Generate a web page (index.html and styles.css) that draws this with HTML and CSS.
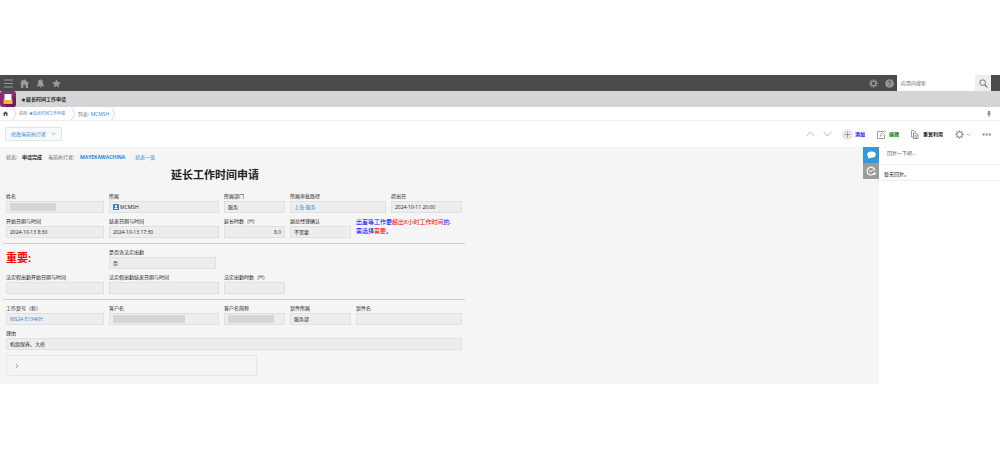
FILE: index.html
```html
<!DOCTYPE html>
<html lang="zh-CN">
<head>
    <meta charset="UTF-8">
    <title>延长时间工作申请</title>
    <link rel="stylesheet" href="styles.css">
</head>
<body>
    <!-- 顶部导航 -->
    <header class="topbar">
        <nav class="topbar-left">
            <button class="icon-btn" aria-label="菜单"><svg width="9" height="9" viewBox="0 0 9 9"><path d="M0 1h9M0 4.5h9M0 8h9" stroke="#999" fill="none"/></svg></button>
            <button class="icon-btn" aria-label="首页"><svg width="9" height="9" viewBox="0 0 9 9"><path d="M4.5 0.3L8.8 3.9V5L8 4.5V9H5.6V5.8H3.4V9H1V4.5L0.2 5V3.9L1.5 2.8V1H2.7V1.8z" fill="#999"/></svg></button>
            <button class="icon-btn" aria-label="通知"><svg width="9" height="9" viewBox="0 0 9 9"><path d="M4.5 0.3C6.4 0.6 6.9 2 6.9 3.8C6.9 5.5 7.6 6 8.3 6.8V7.3H0.7V6.8C1.4 6 2.1 5.5 2.1 3.8C2.1 2 2.6 0.6 4.5 0.3zM3.5 7.8h2L4.5 9z" fill="#999"/></svg></button>
            <button class="icon-btn" aria-label="收藏"><svg width="9" height="9" viewBox="0 0 9 9"><path d="M4.5 0.2L5.8 3L8.9 3.4L6.6 5.5L7.2 8.6L4.5 7.1L1.8 8.6L2.4 5.5L0.1 3.4L3.2 3z" fill="#999"/></svg></button>
        </nav>
        <div class="topbar-right">
            <button class="icon-btn" aria-label="设置"><svg width="9" height="9" viewBox="0 0 9 9"><circle cx="4.5" cy="4.5" r="2.4" stroke="#999" stroke-width="1.3" fill="none"/><path d="M4.5 0.3v1.5M4.5 7.2v1.5M0.3 4.5h1.5M7.2 4.5h1.5M1.5 1.5l1 1M6.5 6.5l1 1M1.5 7.5l1-1M6.5 2.5l1-1" stroke="#999" stroke-width="1.3"/></svg></button>
            <button class="icon-btn" aria-label="帮助"><svg width="9" height="9" viewBox="0 0 9 9"><circle cx="4.5" cy="4.5" r="4.3" fill="#999"/><path d="M3 3.6C3 1.7 6 1.7 6 3.5C6 4.5 4.5 4.4 4.5 5.6" stroke="#4b4b4b" fill="none"/><circle cx="4.5" cy="7" r="0.6" fill="#4b4b4b"/></svg></button>
            <form class="search">
                <input type="text" placeholder="应用内搜索" aria-label="应用内搜索">
                <button type="button" class="search-btn" aria-label="搜索"><svg width="9" height="9" viewBox="0 0 9 9"><circle cx="3.6" cy="3.6" r="2.8" stroke="#777" fill="none"/><path d="M5.7 5.7L8.4 8.4" stroke="#777" stroke-width="1.3"/></svg></button>
            </form>
        </div>
    </header>

    <!-- 应用名 -->
    <div class="appbar">
        <svg class="app-icon" width="16" height="16" viewBox="0 0 16 16"><rect width="16" height="16" rx="3" fill="#8b2a72"/><path d="M13 5L16 8V13Q16 16 13 16H7L4 13z" fill="#6c1d59"/><path d="M4.5 3h7v7h-7z" fill="#fff"/><path d="M3.5 7.5L5 9H11L12.5 7.5V13H3.5z" fill="#f5b33d"/></svg>
        <h1 class="app-name">★延长时间工作申请</h1>
    </div>

    <nav class="crumbs">
        <a class="crumb crumb-home" href="#" aria-label="首页"><svg width="5" height="5" viewBox="0 0 9 9"><path d="M4.5 0.3L8.8 3.9V5L8 4.5V9H5.6V5.8H3.4V9H1V4.5L0.2 5V3.9z" fill="#555"/></svg></a>
        <svg class="arrow" width="5" height="13" viewBox="0 0 5 13"><path d="M0.5 0L4 6.5L0.5 13" stroke="#ddd" fill="none"/></svg>
        <span class="crumb crumb-app">应用: <a href="#">★延长时间工作申请</a></span>
        <svg class="arrow" width="5" height="13" viewBox="0 0 5 13"><path d="M0.5 0L4 6.5L0.5 13" stroke="#ddd" fill="none"/></svg>
        <span class="crumb crumb-list">列表: <a href="#">MCMSH</a></span>
        <svg class="arrow" width="5" height="13" viewBox="0 0 5 13"><path d="M0.5 0L4 6.5L0.5 13" stroke="#ddd" fill="none"/></svg>
        <svg class="pin" width="4" height="6" viewBox="0 0 4 6"><path d="M1 0h2v2.5h1v1H2.5V6h-1V3.5H0v-1h1z" fill="#888"/></svg>
    </nav>

    <!-- 操作栏 -->
    <div class="toolbar">
        <button class="assignee-btn">修改当前执行者
            <svg width="5" height="4" viewBox="0 0 5 4"><path d="M0.5 0.8L2.5 2.8L4.5 0.8" stroke="#3498db" stroke-width="0.6" fill="none"/></svg>
        </button>
        <div class="actions">
            <button class="act act-prev" aria-label="上一条"><svg width="9" height="6" viewBox="0 0 9 6"><path d="M0.5 5.2L4.5 1L8.5 5.2" stroke="#aaa" stroke-width="0.8" fill="none"/></svg></button>
            <button class="act act-next" aria-label="下一条"><svg width="9" height="6" viewBox="0 0 9 6"><path d="M0.5 0.8L4.5 5L8.5 0.8" stroke="#aaa" stroke-width="0.8" fill="none"/></svg></button>
            <button class="act act-add"><svg width="11" height="11" viewBox="0 0 11 11"><circle cx="5.5" cy="5.5" r="5.5" fill="#e8e8e8"/><path d="M5.5 2.5v6M2.5 5.5h6" stroke="#888" stroke-width="0.8"/></svg>添加</button>
            <button class="act act-edit"><svg width="9" height="9" viewBox="0 0 9 9"><path d="M6 1.5H0.5V8.5H7.5V4.5" stroke="#888" stroke-width="0.8" fill="none"/><path d="M3 6.2L3.4 4.6L7.5 0.6L8.6 1.6L4.5 5.7z" stroke="#888" stroke-width="0.6" fill="#fff"/></svg>编辑</button>
            <button class="act act-reuse"><svg width="8" height="9" viewBox="0 0 8 9"><path d="M2 7H0.5V0.5H3L4.5 2" stroke="#888" stroke-width="0.8" fill="none"/><path d="M2.5 3H5L7 5V8.5H2.5z" stroke="#777" stroke-width="0.8" fill="#fff"/><path d="M3.5 5.7h2.5M3.5 7.1h2.5" stroke="#777" stroke-width="0.7"/></svg>重复利用</button>
            <button class="act act-gear" aria-label="设置"><svg width="9" height="9" viewBox="0 0 9 9"><circle cx="4.5" cy="4.5" r="2.7" stroke="#888" fill="none"/><path d="M4.5 0.3v1.5M4.5 7.2v1.5M0.3 4.5h1.5M7.2 4.5h1.5M1.5 1.5l1 1M6.5 6.5l1 1M1.5 7.5l1-1M6.5 2.5l1-1" stroke="#888" stroke-width="1.3"/></svg><svg width="3" height="3" viewBox="0 0 3 3"><path d="M0 1L1.5 2.3L3 1" stroke="#888" stroke-width="0.7" fill="none"/></svg></button>
            <button class="act act-more" aria-label="更多"><svg width="9" height="3" viewBox="0 0 9 3"><path d="M0.5 0.5h2v2h-2zM3.6 0.5h2v2h-2zM6.7 0.5h2v2h-2z" fill="#888"/></svg></button>
        </div>
    </div>

    <div class="main">
        <main class="record">
            <div class="status">
                <span class="status-label">状态:</span>
                <b class="status-value">申请完成</b>
                <span class="assignee-label">当前执行者:</span>
                <a class="assignee" href="#">MAYEKAWACHINA</a>
                <a href="#">状态一览</a>
            </div>

            <div class="form">
                <h2 class="form-title">延长工作时间申请</h2>

                <div class="row">
                    <div class="field w-a"><div class="label">姓名</div><div class="value"><span class="mask mask-name"></span></div></div>
                    <div class="field w-b"><div class="label">所属</div><div class="value"><svg class="org" width="6" height="6" viewBox="0 0 6 6"><rect width="6" height="6" rx="0.6" fill="#2f80b8"/><circle cx="3" cy="2.1" r="1.2" fill="#fff"/><path d="M1 5Q1 3.5 3 3.5Q5 3.5 5 5z" fill="#fff"/></svg>MCMSH</div></div>
                    <div class="field w-c"><div class="label">所属部门</div><div class="value">服务</div></div>
                    <div class="field w-d"><div class="label">所属审批路径</div><div class="value"><a href="#">上海-服务</a></div></div>
                    <div class="field w-fill"><div class="label">提出日</div><div class="value">2024-10-11 20:00</div></div>
                </div>

                <div class="row">
                    <div class="field w-a"><div class="label">开始日期与时间</div><div class="value">2024-10-13 8:30</div></div>
                    <div class="field w-b"><div class="label">结束日期与时间</div><div class="value">2024-10-13 17:30</div></div>
                    <div class="field w-c"><div class="label">延长时数（H）</div><div class="value number">8.0</div></div>
                    <div class="field w-c"><div class="label">副总经理确认</div><div class="value">不需要</div></div>
                    <p class="note">出差等工作要<em>超出8小时工作时间</em>的,<br>需选择<em>需要</em>。</p>
                </div>

                <hr>

                <div class="row">
                    <div class="important w-a">重要:</div>
                    <div class="field w-e"><div class="label">是否含法定出勤</div><div class="value">否</div></div>
                </div>

                <div class="row">
                    <div class="field w-a"><div class="label">法定假出勤开始日期与时间</div><div class="value"></div></div>
                    <div class="field w-b"><div class="label">法定假出勤结束日期与时间</div><div class="value"></div></div>
                    <div class="field w-c"><div class="label">法定出勤时数（H）</div><div class="value"></div></div>
                </div>

                <hr>

                <div class="row">
                    <div class="field w-a"><div class="label">工作案号（新）</div><div class="value"><a href="#">MS24-5134KH</a></div></div>
                    <div class="field w-b"><div class="label">客户名</div><div class="value"><span class="mask mask-customer"></span></div></div>
                    <div class="field w-c"><div class="label">客户名简称</div><div class="value"><span class="mask mask-name"></span></div></div>
                    <div class="field w-c"><div class="label">案件所属</div><div class="value">服务部</div></div>
                    <div class="field w-fill"><div class="label">案件名</div><div class="value"></div></div>
                </div>

                <div class="row">
                    <div class="field w-fill"><div class="label">理由</div><div class="value">机组保养、大修</div></div>
                </div>

                <button class="group" aria-label="展开"><svg width="4" height="6" viewBox="0 0 4 6"><path d="M0.8 0.8L3 3L0.8 5.2" stroke="#888" stroke-width="0.8" fill="none"/></svg></button>
            </div>
        </main>

        <div class="tabs">
            <button class="tab tab-active" aria-label="评论"><svg width="9" height="8" viewBox="0 0 9 8"><ellipse cx="4.5" cy="3.6" rx="4.3" ry="3.1" fill="#fff"/><path d="M1.5 5L1 7.8L4.5 6.3z" fill="#fff"/></svg></button>
            <button class="tab" aria-label="更改记录"><svg width="10" height="10" viewBox="0 0 10 10"><path d="M8.2 7.4A3.9 3.9 0 1 1 8.9 4.6" stroke="#fff" stroke-width="1.2" fill="none"/><path d="M3.2 4.4L4.8 6L7 3.4" stroke="#fff" fill="none"/><path d="M9.8 6L9.2 9.2L6.6 7.6z" fill="#fff"/></svg></button>
        </div>

        <aside class="comments">
            <input class="comment-input" type="text" placeholder="回复一下吧..." aria-label="回复">
            <p class="no-comment">暂无回复。</p>
        </aside>
    </div>
</body>
</html>
```
FILE: styles.css
```css
*{
    box-sizing: border-box;
    padding: 0;
    margin: 0;
}
body{
    padding-top: 75px;
    background-color: #fff;
    color: #222;
    font: 5px/8px "Open Sans", "Noto Sans CJK SC", sans-serif;
}
a{
    color: #2a85d8;
    text-decoration: none;
}
button,input{
    border: 0;
    background: none;
    font: inherit;
    color: inherit;
}
button{
    cursor: pointer;
}
svg{
    display: block;
    flex: none;
}

/* 顶部导航 */
.topbar{
    display: flex;
    justify-content: space-between;
    height: 16px;
    background-color: #4b4b4b;
}
.topbar-left,.topbar-right{
    display: flex;
    align-items: center;
}
.topbar-left{
    gap: 7px;
    padding-left: 4px;
}
.topbar-right{
    gap: 7px;
    padding-right: 9px;
}
.search{
    display: flex;
    width: 94px;
    height: 16px;
    margin-left: -4px;
    background-color: #fff;
}
.search input{
    flex: 1;
    min-width: 0;
    padding: 0 4px;
}
.search input::placeholder{
    color: #666;
}
.search-btn{
    display: flex;
    align-items: center;
    justify-content: center;
    width: 16px;
    background-color: #eee;
}

.appbar{
    display: flex;
    align-items: center;
    gap: 5px;
    height: 16px;
    background-color: #d4d5d7;
}
.app-name{
    font-size: 5px;
    font-weight: bold;
}

.crumbs{
    display: flex;
    align-items: center;
    height: 14px;
    padding: 0 9px 0 3px;
    border-bottom: 1px solid #eee;
    color: #777;
}
.crumb-home{
    padding-right: 4px;
}
.crumb-app{
    width: 54px;
    padding-left: 2px;
    font-size: 4px;
}
.crumb-list{
    width: 35px;
    padding-left: 2px;
}
.pin{
    margin-left: auto;
}

/* 操作栏 */
.toolbar{
    display: flex;
    align-items: center;
    justify-content: space-between;
    height: 26px;
    padding: 0 9px 0 5px;
}
.assignee-btn{
    display: flex;
    align-items: center;
    gap: 5px;
    height: 14px;
    padding: 0 5px;
    border: 1px solid #e3e7e8;
    background-color: #f7f9fa;
    color: #2a85d8;
}
.actions{
    display: flex;
    align-items: center;
    gap: 12px;
}
.act{
    display: flex;
    align-items: center;
    gap: 3px;
    font-weight: bold;
}
.act-prev{
    margin-right: -4px;
}
.act-next{
    margin-right: -2px;
}
.act-add{
    gap: 2px;
    color: #00f;
}
.act-edit{
    color: #008000;
}
.act-reuse{
    gap: 4px;
}

.main{
    display: flex;
    align-items: stretch;
    background-color: #f5f5f5;
}
.record{
    flex: 1;
    padding: 6px 0 8px;
}
.status{
    display: flex;
    padding-left: 6px;
}
.status-label,.assignee-label{
    color: #666;
}
.status-label{
    width: 16px;
}
.status-value{
    width: 26px;
}
.assignee-label{
    width: 32px;
}
.assignee{
    width: 55px;
    font-weight: bold;
}

/* 表单 */
.form{
    width: 462px;
    margin-left: 3px;
}
.form-title{
    padding: 6px 0 10px;
    margin-right: 38px;
    font-size: 11px;
    line-height: 16px;
    text-align: center;
}
.row{
    display: flex;
    gap: 5px;
    padding: 0 3px;
    margin-bottom: 5px;
}
.label{
    height: 8px;
    line-height: 7px;
    white-space: nowrap;
}
.value{
    display: flex;
    align-items: center;
    height: 12px;
    padding: 0 3px;
    border: 1px solid #e0e0e0;
    background-color: #ededed;
}
.number{
    justify-content: flex-end;
}
.w-a{
    width: 98px;
}
.w-b{
    width: 110px;
}
.w-c{
    width: 61px;
}
.w-d{
    width: 96px;
}
.w-e{
    width: 107px;
}
.w-fill{
    flex: 1;
}
.mask{
    height: 8px;
    background-color: #d6d6d6;
}
.mask-name{
    width: 46px;
}
.mask-customer{
    width: 72px;
}
.org{
    margin-right: 1px;
}
.note{
    color: #00f;
    font-size: 6px;
    line-height: 9px;
}
.note em{
    color: #f00;
    font-style: normal;
}
.important{
    color: #f00;
    font-size: 11px;
    font-weight: bold;
    line-height: 18px;
}
hr{
    margin-bottom: 5px;
    border: 0;
    border-top: 1px solid #ccc;
}
.group{
    display: flex;
    align-items: center;
    width: 251px;
    height: 21px;
    padding-left: 8px;
    margin-left: 3px;
    border: 1px solid #e8e8e8;
}

/* 评论 */
.tab{
    display: flex;
    align-items: center;
    justify-content: center;
    width: 16px;
    height: 16px;
    background-color: #9b9b9b;
}
.tab-active{
    background-color: #3498db;
}
.comments{
    width: 121px;
    background-color: #fff;
}
.comment-input{
    display: block;
    width: 100%;
    height: 18px;
    padding: 0 8px 5px;
    border-bottom: 1px solid #eee;
}
.comment-input::placeholder{
    color: #666;
}
.no-comment{
    padding: 5px 5px 2px;
    border-bottom: 1px solid #eee;
}
```
